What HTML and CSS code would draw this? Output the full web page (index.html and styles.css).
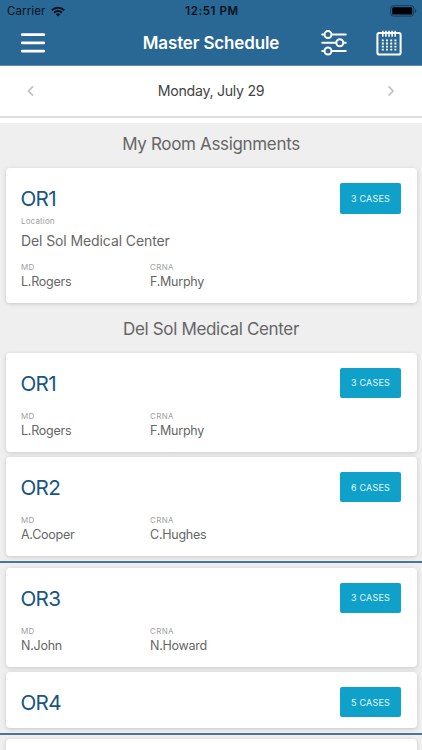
FILE: index.html
```html
<!DOCTYPE html>
<html lang="en">
<head>
<meta charset="utf-8">
<title>Master Schedule</title>
<link rel="stylesheet" href="styles.css">
</head>
<body>
<div class="screen">
  <header class="header">
    <div class="status">
      <div class="carrier"><span>Carrier</span>
        <svg width="14" height="11" viewBox="0 0 14 11" fill="none" stroke="#07121b" stroke-width="2"><path d="M.8 4.2a8.8 8.8 0 0 1 12.4 0M3.1 6.7a5.5 5.5 0 0 1 7.8 0"/><path d="M4.8 8.3a3.1 3.1 0 0 1 4.4 0L7 10.6z" fill="#07121b" stroke="none"/></svg>
      </div>
      <time class="clock">12:51 PM</time>
      <svg class="battery" width="27" height="12" viewBox="0 0 27 12"><rect x=".7" y=".7" width="23" height="10.4" rx="2.6" fill="none" stroke="#153c59"/><rect x="2.2" y="2.2" width="20" height="7.4" rx="1.2" fill="#000"/><path d="M25 4v4q1.3-.7 1.3-2T25 4" fill="#153c59"/></svg>
    </div>
    <div class="nav">
      <svg class="menu" width="26" height="22" viewBox="0 0 26 22" stroke="#fff" stroke-width="2.7" stroke-linecap="round"><path d="M2.2 2.7h21.6M2.2 10.9h21.6M2.2 19.1h21.6"/></svg>
      <h1>Master Schedule</h1>
      <svg class="filter" width="26" height="26" viewBox="0 0 26 26" fill="none" stroke="#fff" stroke-width="2" stroke-linecap="round"><path d="M1.2 4.6h2M10.8 4.6h14M1.2 12.8h13.6M22.6 12.8h2.2M1.2 21h2M10.8 21h14"/><circle cx="7" cy="4.6" r="3.5"/><circle cx="18.8" cy="12.8" r="3.5"/><circle cx="7" cy="21" r="3.5"/></svg>
      <svg class="calendar" width="26" height="26" viewBox="0 0 26 26" fill="none" stroke="#fff" stroke-width="2"><rect x="1.4" y="3" width="23.2" height="21.6" rx="1.8"/><path d="M6.8.7v6M9.9.7v6M13 .7v6M16.1.7v6M19.2.7v6" stroke-width="1.6"/><path d="M5.8 10.4h14.6M5.8 13.5h14.6M5.8 16.6h14.6M5.8 19.7h14.6" stroke-width="1.8" stroke-dasharray="2 2.2"/></svg>
    </div>
  </header>
  <div class="datebar">
    <svg width="8" height="12" viewBox="0 0 8 12" fill="none" stroke="#c3c3c5" stroke-width="1.8"><path d="M6 1.3 1.6 6 6 10.7"/></svg>
    <span class="date">Monday, July 29</span>
    <svg width="8" height="12" viewBox="0 0 8 12" fill="none" stroke="#c3c3c5" stroke-width="1.8"><path d="M1.6 1.3 6 6l-4.4 4.7"/></svg>
  </div>
  <main class="list">
    <h2>My Room Assignments</h2>
    <article class="card detailed">
      <div class="top"><h3>OR1</h3><button>3 CASES</button></div>
      <div class="location"><small>Location</small><p>Del Sol Medical Center</p></div>
      <div class="staff"><div><small>MD</small><p>L.Rogers</p></div><div><small>CRNA</small><p>F.Murphy</p></div></div>
    </article>
    <h2 class="center-name">Del Sol Medical Center</h2>
    <article class="card">
      <div class="top"><h3>OR1</h3><button>3 CASES</button></div>
      <div class="staff"><div><small>MD</small><p>L.Rogers</p></div><div><small>CRNA</small><p>F.Murphy</p></div></div>
    </article>
    <article class="card">
      <div class="top"><h3>OR2</h3><button>6 CASES</button></div>
      <div class="staff"><div><small>MD</small><p>A.Cooper</p></div><div><small>CRNA</small><p>C.Hughes</p></div></div>
    </article>
    <hr>
    <article class="card">
      <div class="top"><h3>OR3</h3><button>3 CASES</button></div>
      <div class="staff"><div><small>MD</small><p>N.John</p></div><div><small>CRNA</small><p>N.Howard</p></div></div>
    </article>
    <article class="card short">
      <div class="top"><h3>OR4</h3><button>5 CASES</button></div>
    </article>
    <hr>
    <article class="card"></article>
  </main>
</div>
</body>
</html>
```
FILE: styles.css
```css
* { box-sizing: border-box; }
body { margin: 0; font-family: Inter, "Liberation Sans", sans-serif; }
h1, h2, h3, p { margin: 0; font-weight: 400; white-space: nowrap; }
svg { display: block; flex: none; }
.screen { width: 422px; height: 750px; overflow: hidden; display: flex; flex-direction: column; background: #efeff0; }
.header { height: 66px; flex: none; background: #296794; border-bottom: 1px solid #5f8eae; }
.status { height: 22px; display: grid; grid-template-columns: 1fr auto 1fr; align-items: center; padding: 0 5px 0 7px; color: #07121b; font-size: 11.5px; }
.carrier { display: flex; align-items: center; gap: 6px; letter-spacing: .1px; }
.clock { font-weight: 600; letter-spacing: .6px; }
.battery { justify-self: end; }
.nav { height: 42px; display: grid; grid-template-columns: 26px 1fr 26px 26px; align-items: center; padding: 0 20px; column-gap: 29px; color: #fff; }
.nav h1 { font-size: 17px; font-weight: 600; justify-self: center; margin-left: 55px; letter-spacing: -.15px; }
.datebar { height: 52px; flex: none; display: flex; justify-content: space-between; align-items: center; padding: 0 27px; background: #fff; border-bottom: 2px solid #dedede; }
.date { font-size: 14.2px; color: #444; letter-spacing: -.3px; position: relative; top: -1px; }
.list { flex: none; border-top: 5px solid #fff; padding: 0 5.5px; }
.list h2 { height: 45px; line-height: 43px; text-align: center; font-size: 17px; letter-spacing: -.33px; color: #666; }
.list .center-name { height: 50px; line-height: 52px; }
.card { height: 99.25px; padding: 15px 15.5px 0; margin-bottom: 5px; background: #fff; border-radius: 4px; box-shadow: 0 1px 4px #0000002b; }
.detailed { height: 134.5px; margin-bottom: 0; }
.short { height: 56px; }
.top { height: 32px; display: flex; justify-content: space-between; }
.top h3 { font-size: 20.7px; line-height: 32px; color: #195583; letter-spacing: -.7px; margin-left: -.5px; }
.top button { width: 61px; height: 30.5px; border: 0; border-radius: 2px; padding: 0; background: #10a1cb; color: #e4f7fc; font: 9px Inter, sans-serif; letter-spacing: .2px; }
small { display: block; height: 10px; line-height: 10px; font-size: 8px; letter-spacing: .35px; color: #a0a0a0; }
.location { height: 45px; padding-top: 1px; }
.location small { letter-spacing: .15px; }
.location p { font-size: 14px; line-height: 29px; color: #666; letter-spacing: -.1px; }
.staff { display: grid; grid-template-columns: 129px 1fr; padding-top: 11px; }
.detailed .staff { padding-top: 2px; }
.staff p { font-size: 12.5px; line-height: 20px; color: #666; letter-spacing: -.25px; }
hr { height: 2px; margin: 0 -5.5px 4.5px; border: 0; background: #487698; }
```
